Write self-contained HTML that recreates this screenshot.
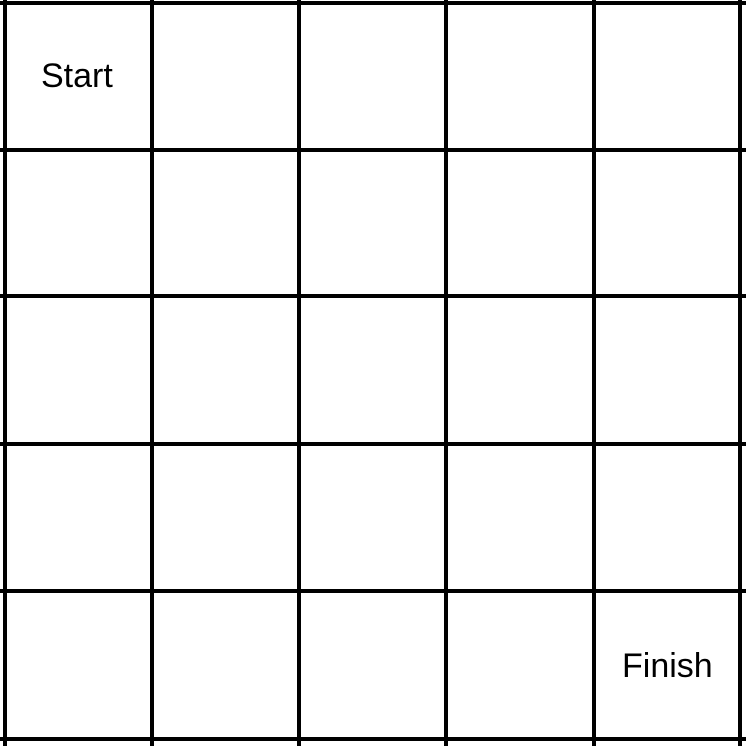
<!DOCTYPE html>
<html><head><meta charset="utf-8"><style>
html,body{margin:0;padding:0;background:#fff;width:746px;height:746px;overflow:hidden}
svg{display:block}
text{font-family:"Liberation Sans",Arial,sans-serif;font-size:34px;fill:#000}
</style></head><body>
<svg width="746" height="746" viewBox="0 0 746 746" xmlns="http://www.w3.org/2000/svg">
<g stroke="#000" stroke-width="4" stroke-linecap="square" fill="none">
<line x1="5" y1="0" x2="5" y2="746"/>
<line x1="152" y1="0" x2="152" y2="746"/>
<line x1="299" y1="0" x2="299" y2="746"/>
<line x1="446" y1="0" x2="446" y2="746"/>
<line x1="594" y1="0" x2="594" y2="746"/>
<line x1="740" y1="0" x2="740" y2="746"/>
<line x1="0" y1="3" x2="746" y2="3"/>
<line x1="0" y1="150" x2="746" y2="150"/>
<line x1="0" y1="296" x2="746" y2="296"/>
<line x1="0" y1="444" x2="746" y2="444"/>
<line x1="0" y1="591" x2="746" y2="591"/>
<line x1="0" y1="739" x2="746" y2="739"/>
</g>
<text x="41" y="87">Start</text>
<text x="622" y="677">Finish</text>
</svg>
</body></html>
